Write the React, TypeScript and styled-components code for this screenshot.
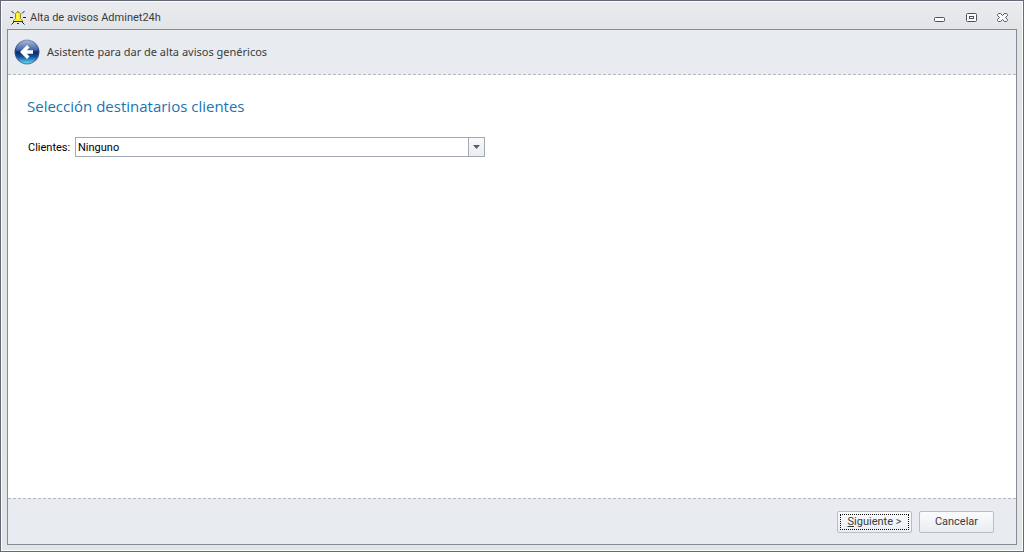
import React from "react";
import styled, { createGlobalStyle } from "styled-components";

const GlobalStyle = createGlobalStyle`
  *, *::before, *::after { box-sizing: border-box; }
  html, body { margin: 0; }
  body { font-family: Roboto, Tahoma, sans-serif; font-size: 11px; color: #3b3b3b; }
  button, select { font: inherit; color: inherit; }
`;

const dashes = "repeating-linear-gradient(to right, #b3b8c5 0 3px, #eef0f4 3px 5px)";

const Window = styled.div`
  display: flex;
  flex-direction: column;
  min-height: 100vh;
  padding: 0 6px 6px;
  border: 1px solid #646a75;
  box-shadow: inset 0 0 0 1px #fbfbfc;
  background: linear-gradient(#ebecf0, #e1e4e7 30px, #e3e6e8);
`;

const TitleBar = styled.header`
  display: flex;
  align-items: center;
  height: 28px;
  padding: 6px 6px 0 3px;
  gap: 4px;
`;

const Title = styled.h1`
  flex: 1;
  margin: 0;
  font-size: 11px;
  font-weight: 400;
  line-height: 16px;
`;

const WindowButtons = styled.div`
  display: flex;
  gap: 16px;
`;

const WindowButton = styled.button`
  display: flex;
  align-items: center;
  justify-content: center;
  width: 16px;
  height: 16px;
  padding: 0;
  border: 0;
  background: none;
`;

const Panel = styled.main`
  display: flex;
  flex: 1;
  flex-direction: column;
  border: 1px solid #868b94;
  background: #fff;
`;

const WizardHeader = styled.div`
  display: flex;
  align-items: center;
  height: 45px;
  padding: 0 6px 1px;
  gap: 7px;
  background: ${dashes} bottom / 100% 1px no-repeat #e8ebf0;
`;

const BackButton = styled.button`
  display: flex;
  width: 26px;
  height: 26px;
  padding: 0;
  border: 0;
  background: none;
`;

const WizardTitle = styled.p`
  margin: 0;
  font-family: "Noto Sans", "Segoe UI", sans-serif;
  font-size: 11px;
  line-height: 16px;
`;

const Page = styled.section`
  flex: 1;
  padding: 19px;
`;

const Heading = styled.h2`
  margin: 0;
  font-family: "Open Sans", "Segoe UI", sans-serif;
  font-size: 15px;
  font-weight: 400;
  line-height: 24px;
  color: #1a75b0;
`;

const Field = styled.div`
  display: flex;
  align-items: center;
  margin: 19px 0 0 1px;
  gap: 5px;
  color: #000;
`;

const Label = styled.label`
  width: 42px;
  white-space: nowrap;
`;

const SelectBox = styled.div`
  display: grid;
  grid-template-columns: 1fr 16px;
  width: 410px;
  max-width: 80%;
  height: 20px;
  border: 1px solid #a3a8b5;
  background: #fff;
`;

const Select = styled.select`
  grid-area: 1 / 1 / 2 / 3;
  width: 100%;
  padding: 0 2px;
  border: 0;
  outline: 0;
  background: none;
  appearance: none;
`;

const Arrow = styled.span`
  display: flex;
  grid-area: 1 / 2 / 2 / 3;
  align-items: center;
  justify-content: center;
  border-left: 1px solid #a3a8b5;
  background: linear-gradient(#f8f9fb, #e9edf1);
  pointer-events: none;
`;

const Footer = styled.footer`
  display: flex;
  align-items: center;
  justify-content: flex-end;
  height: 46px;
  padding: 1px 22px 0;
  gap: 7px;
  background: ${dashes} top / 100% 1px no-repeat #e8ebf0;
`;

const ActionButton = styled.button<{ $focused?: boolean }>`
  width: 75px;
  height: 22px;
  padding: 2px;
  border: 1px solid #b9bdc5;
  border-radius: 2px;
  background: linear-gradient(#fafbfc, #e9edf1);
  white-space: nowrap;
  span {
    display: block;
    border: 1px dotted ${(p) => (p.$focused ? "#111" : "transparent")};
    line-height: 14px;
  }
`;

const BellIcon = () => (
  <svg width="16" height="16" viewBox="0 0 16 16" aria-hidden="true">
    <path d="M1.500 1l2.500 2.500M14.500 1L12 3.500M0 7.500h3M13 7.500h3M1.500 14.500L4 12M14.500 14.500L12 12" stroke="#222" />
    <path d="M7.500 1.500h1v1h1l1 1v5l2 2v1h-9v-1l2-2v-5l1-1h1z" fill="#fff01c" stroke="#8f8a3a" />
    <path d="M3 11.500h10M7 13.500h2" stroke="#333" />
    <path d="M7.500 4v5" stroke="#fffde0" />
  </svg>
);

const BackIcon = () => (
  <svg width="26" height="26" viewBox="0 0 26 26" aria-hidden="true">
    <defs>
      <linearGradient id="ball" x1="0" y1="0" x2="0" y2="1">
        <stop offset="0" stopColor="#a9b9da" />
        <stop offset=".4" stopColor="#4a68a8" />
        <stop offset=".5" stopColor="#0a2870" />
        <stop offset=".7" stopColor="#14539f" />
        <stop offset="1" stopColor="#62e2ff" />
      </linearGradient>
      <linearGradient id="rim" x1="0" y1="0" x2="0" y2="1">
        <stop offset="0" stopColor="#8496bd" />
        <stop offset=".5" stopColor="#19376f" />
        <stop offset="1" stopColor="#5c7fa8" />
      </linearGradient>
    </defs>
    <circle cx="13" cy="13" r="11.8" fill="url(#ball)" stroke="url(#rim)" strokeWidth="1.2" />
    <path d="M6 13l7-7 2.5 2.4-2.6 2.8H19v3.6h-6.1l2.6 2.8L13 20z" fill="#fff" />
  </svg>
);

export default function App() {
  return (
    <>
      <GlobalStyle />
      <Window>
        <TitleBar>
          <BellIcon />
          <Title>Alta de avisos Adminet24h</Title>
          <WindowButtons>
            <WindowButton aria-label="Minimizar">
              <svg width="12" height="10" viewBox="0 0 12 10">
                <rect x="1.5" y="4.5" width="10" height="4" rx="1" fill="#fafafa" stroke="#4e535b" />
              </svg>
            </WindowButton>
            <WindowButton aria-label="Maximizar">
              <svg width="12" height="10" viewBox="0 0 12 10">
                <rect x="1.5" y=".5" width="10" height="8" rx="1" fill="#fafafa" stroke="#4e535b" />
                <rect x="4.5" y="3.5" width="4" height="2" fill="#fafafa" stroke="#4e535b" />
              </svg>
            </WindowButton>
            <WindowButton aria-label="Cerrar">
              <svg width="12" height="10" viewBox="0 0 12 10">
                <path d="M1.5.5h2l2 2 2-2h2l1 1v1l-2 2 2 2v1l-1 1h-2l-2-2-2 2h-2l-1-1v-1l2-2-2-2v-1z" fill="#fafafa" stroke="#4e535b" />
              </svg>
            </WindowButton>
          </WindowButtons>
        </TitleBar>
        <Panel>
          <WizardHeader>
            <BackButton aria-label="Atrás"><BackIcon /></BackButton>
            <WizardTitle>Asistente para dar de alta avisos genéricos</WizardTitle>
          </WizardHeader>
          <Page>
            <Heading>Selección destinatarios clientes</Heading>
            <Field>
              <Label htmlFor="clientes">Clientes:</Label>
              <SelectBox>
                <Select id="clientes" defaultValue="Ninguno">
                  <option>Ninguno</option>
                </Select>
                <Arrow>
                  <svg width="7" height="4" viewBox="0 0 7 4"><path d="M0 0h7L3.5 4z" fill="#5b6068" /></svg>
                </Arrow>
              </SelectBox>
            </Field>
          </Page>
          <Footer>
            <ActionButton $focused><span><u>S</u>iguiente &gt;</span></ActionButton>
            <ActionButton><span>Cancelar</span></ActionButton>
          </Footer>
        </Panel>
      </Window>
    </>
  );
}
